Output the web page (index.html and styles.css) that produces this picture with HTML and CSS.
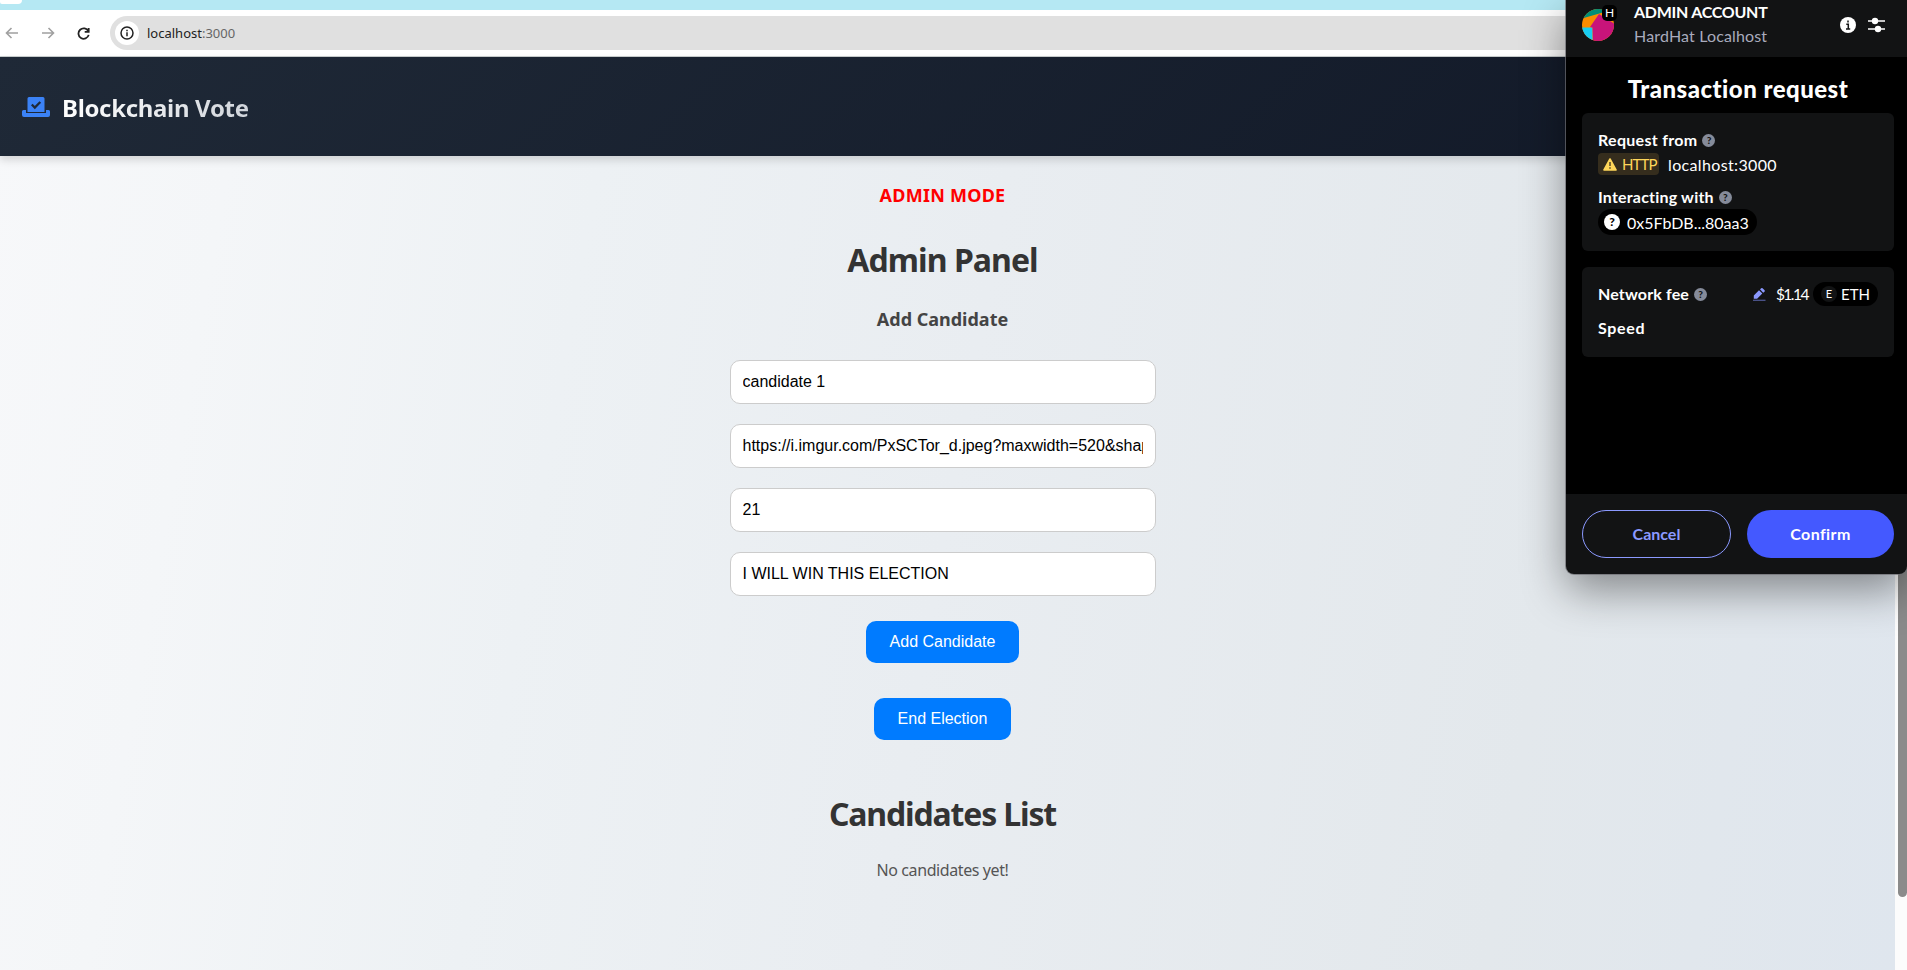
FILE: index.html
```
<!DOCTYPE html>
<html lang="en">
<head>
<meta charset="utf-8">
<title>Blockchain Vote</title>
<link rel="stylesheet" href="styles.css">
</head>
<body>
<div class="window">
  <div class="tabstrip"><span class="tab"></span></div>
  <div class="toolbar">
    <svg class="nav-icon" viewBox="0 0 14 14"><path d="M13 7H2M6.500 2 1.500 7l5 5" stroke="#a0a0a0"/></svg>
    <svg class="nav-icon" viewBox="0 0 14 14"><path d="M1 7h11M7.500 2l5 5-5 5" stroke="#a0a0a0"/></svg>
    <svg class="nav-icon reload" viewBox="0 0 14 14"><path d="M12.200 4.600A5.600 5.600 0 1 0 12.600 8.500M12.600 1v4.300H8.300" stroke="#222" stroke-width="1.900"/></svg>
    <div class="address">
      <span class="site-info"><svg width="14" height="14" viewBox="0 0 14 14"><circle cx="7" cy="7" r="6" fill="none" stroke="#222" stroke-width="1.500"/><path d="M7 6.300v4M7 3.700v1.500" stroke="#222" stroke-width="1.500"/></svg></span>
      <span class="url">localhost<span class="port">:3000</span></span>
    </div>
  </div>
  <div class="viewport">
    <div class="page">
      <header class="site-header">
        <svg class="ballot" viewBox="0 0 28 20"><path fill="#3b82f6" d="M7 0h14a1.500 1.500 0 0 1 1.500 1.500V15h-17V1.500A1.500 1.500 0 0 1 7 0zM0 14.500A1.500 1.500 0 0 1 1.500 13H4v3h20v-3h2.500a1.500 1.500 0 0 1 1.500 1.500v3.500a2 2 0 0 1-2 2H2a2 2 0 0 1-2-2z"/><path d="m9.800 7.500 3 3L18.300 5" fill="none" stroke="#1f2937" stroke-width="2.300"/></svg>
        <span class="brand">Blockchain Vote</span>
      </header>
      <main class="content">
        <p class="mode">ADMIN MODE</p>
        <h1 class="title">Admin Panel</h1>
        <h3 class="subtitle">Add Candidate</h3>
        <form class="fields">
          <input class="field" value="candidate 1">
          <input class="field" value="https://i.imgur.com/PxSCTor_d.jpeg?maxwidth=520&amp;shape=thumb">
          <input class="field" value="21">
          <input class="field" value="I WILL WIN THIS ELECTION">
        </form>
        <button class="action">Add Candidate</button>
        <button class="action end">End Election</button>
        <h1 class="title list-title">Candidates List</h1>
        <p class="empty">No candidates yet!</p>
      </main>
    </div>
    <div class="scrollbar"><div class="thumb"></div></div>
  </div>
</div>

<aside class="wallet">
  <div class="account-bar">
    <div class="avatar">
      <svg width="32" height="32" viewBox="0 0 32 32"><clipPath id="round"><circle cx="16" cy="16" r="16"/></clipPath><g clip-path="url(#round)"><path fill="#fa8c00" d="M0 0h32v32H0z"/><path fill="#018e77" d="M0 9.500 26 2V-4H0z"/><path fill="#18cdf2" d="M0 18.500h10.500V32H0z"/><path fill="#c8147a" d="M8 18 17 5l16 10v17H11l-.5-13.500z"/></g></svg>
      <span class="net-badge">H</span>
    </div>
    <div class="account">
      <span class="account-name">ADMIN ACCOUNT</span>
      <span class="account-net">HardHat Localhost</span>
    </div>
    <svg class="info" width="16" height="16" viewBox="0 0 16 16"><circle cx="8" cy="8" r="8" fill="#fff"/><path d="M8 3.500v2M6.300 7.200H8.300V12M6 12h4.200" fill="none" stroke="#121314" stroke-width="1.500"/></svg>
    <svg width="17" height="16" viewBox="0 0 17 16"><path d="M0 4h17M0 12h17" stroke="#fff" stroke-width="1.300"/><circle cx="7" cy="4" r="3.200" fill="#fff"/><circle cx="10" cy="12" r="3.200" fill="#fff"/></svg>
  </div>
  <div class="request">
    <h2 class="request-title">Transaction request</h2>
    <section class="card origin">
      <div class="label-row"><span class="label from">Request from</span><span class="help">?</span></div>
      <div class="site-row">
        <span class="http"><svg width="14" height="13" viewBox="0 0 14 13"><path d="M7 1 13 12H1z" fill="#ffd75a" stroke="#ffd75a" stroke-width="1.600" stroke-linejoin="round"/><path d="M7 4v4M7 9.300v1.400" stroke="#3a311e" stroke-width="1.300"/></svg><span class="http-text">HTTP</span></span>
        <span class="host">localhost:3000</span>
      </div>
      <div class="label-row second"><span class="label with">Interacting with</span><span class="help">?</span></div>
      <div class="contract"><span class="unknown">?</span><span class="hash">0x5FbDB...80aa3</span></div>
    </section>
    <section class="card fee">
      <div class="fee-row">
        <span class="label net">Network fee</span><span class="help">?</span>
        <svg class="pencil" width="13" height="13" viewBox="0 0 13 13"><path d="M.8 10.700V7.400L6 2.200l3.300 3.300-5.200 5.200zM7 1.300 8 .4a1.300 1.300 0 0 1 1.800 0L11.400 2a1.300 1.300 0 0 1 0 1.800l-1.200 1z" fill="#8b99ff"/><path d="M0 12.300h12.500" stroke="#4d558e" stroke-width="1.300"/></svg>
        <span class="price">$1.14</span>
        <span class="token"><span class="token-icon">E</span><span class="token-name">ETH</span></span>
      </div>
      <div class="label speed">Speed</div>
    </section>
  </div>
  <div class="buttons">
    <button class="cancel">Cancel</button>
    <button class="confirm">Confirm</button>
  </div>
</aside>
</body>
</html>
```
FILE: styles.css
```
* { box-sizing: border-box; }
body { margin: 0; height: 970px; overflow: hidden; font-family: "Noto Sans", sans-serif; }
.window { display: flex; flex-direction: column; height: 970px; }

/* Browser chrome */
.tabstrip { height: 10px; background: #b5e8f3; }
.tab { display: block; width: 22px; height: 4px; background: #fff; border-radius: 0 0 8px 4px; }
.toolbar { display: flex; align-items: center; height: 47px; background: #fff; border-bottom: 1px solid #c9cfcf; padding-left: 5px; }
.nav-icon { width: 14px; height: 14px; margin-right: 22px; fill: none; stroke-width: 1.6; }
.nav-icon.reload { width: 13px; height: 13px; margin-right: 23px; }
.address { flex: 1; display: flex; align-items: center; height: 34px; margin-left: -3px; padding-left: 5px; background: #e0e0e0; border-radius: 17px 0 0 17px; }
.site-info { display: flex; align-items: center; justify-content: center; width: 24px; height: 24px; border-radius: 50%; background: #fff; }
.url { margin-left: 8px; font-size: 13px; color: #222; }
.port { color: #666; }

/* Voting page */
.viewport { flex: 1; display: flex; min-height: 0; }
.page { flex: 1; background: linear-gradient(100deg, #f7f8fa 0%, #f4f6f8 12%, #edf1f4 30%, #e9edf1 50%, #e3e8ec 80%, #dfe6ee 100%); }
.site-header { position: relative; display: flex; align-items: center; height: 99px; padding: 3px 0 0 22px; background: linear-gradient(135deg, #1f2937, #111827); box-shadow: 0 4px 8px rgba(0, 0, 0, .14); }
.ballot { width: 28px; height: 20px; margin-bottom: 2px; }
.brand { margin-left: 12px; font-size: 24px; font-weight: 700; line-height: 32px; letter-spacing: -.33px; background: linear-gradient(90deg, #fff, #d1d5db); background-clip: text; color: transparent; }
.content { display: flex; flex-direction: column; align-items: center; margin-left: -10px; }
.mode { margin: 26px 0 0; line-height: 26px; font-size: 18px; font-weight: 700; letter-spacing: .25px; color: #f00; }
.title { margin: 30px 0 0; line-height: 44px; font-size: 32px; font-weight: 700; letter-spacing: -.95px; color: #333; }
.subtitle { margin: 24px 0 0; line-height: 26px; font-size: 18px; font-weight: 700; color: #444; }
.fields { display: flex; flex-direction: column; gap: 20px; margin-top: 28px; }
.field { width: 426px; height: 44px; padding: 0 12px; border: 1px solid #ccc; border-radius: 10px; background: #fff; color: #000; font: 16px "Liberation Sans", Arial, sans-serif; }
.action { width: 153px; height: 42px; margin-top: 25px; border: 0; border-radius: 10px; background: #007bff; color: #fff; font: 16px "Liberation Sans", Arial, sans-serif; }
.action.end { width: 137px; margin-top: 35px; }
.list-title { margin-top: 52px; letter-spacing: -1.15px; }
.empty { margin: 23px 0 0; line-height: 22px; font-size: 16px; letter-spacing: -.4px; color: #555; }
.scrollbar { width: 12px; padding: 0 0 0 3px; background: #fcfcfc; }
.thumb { height: 840px; border-radius: 5px; background: #8b8b8b; }

/* Wallet popup */
.wallet { position: absolute; left: 1566px; top: 0; width: 341px; height: 574px; display: flex; flex-direction: column; background: #121314; border-radius: 0 0 8px 8px; box-shadow: 0 0 0 1px rgba(110, 110, 115, .7), 0 16px 44px rgba(0, 0, 0, .42); color: #fff; font-family: Lato, sans-serif; }
.account-bar { display: flex; align-items: flex-start; height: 57px; padding: 0 22px 0 16px; }
.avatar { position: relative; width: 32px; height: 32px; margin-top: 9px; }
.net-badge { position: absolute; left: 20px; top: -4px; width: 15px; height: 16px; border-radius: 5px; background: #000; font-size: 12px; line-height: 16px; text-align: center; }
.account { flex: 1; display: flex; flex-direction: column; margin: 0 0 0 20px; }
.account-name { font-size: 16px; line-height: 24px; font-weight: 700; letter-spacing: -.27px; }
.account-net { font-size: 16px; line-height: 24px; letter-spacing: .15px; color: #a9abbd; }
.account-bar > svg { margin-top: 17px; }
.account-bar > .info { margin-right: 12px; }
.request { flex: 1; padding: 16px; background: #000; }
.request-title { width: 312px; margin: 0 0 8px; font-size: 24px; line-height: 32px; font-weight: 900; letter-spacing: .48px; text-align: center; white-space: nowrap; }
.card { width: 312px; padding: 15px 16px; background: #121314; border-radius: 6px; }
.origin { height: 138px; }
.fee { height: 90px; margin-top: 16px; }
.label { font-size: 16px; line-height: 24px; font-weight: 700; }
.from { letter-spacing: .3px; }
.with { letter-spacing: .2px; }
.net { letter-spacing: .15px; }
.label-row { display: flex; align-items: center; height: 24px; }
.help { display: inline-block; width: 13px; height: 13px; margin-left: 5px; border-radius: 50%; background: #858b9a; color: #121314; font-size: 10px; line-height: 13px; font-weight: 900; text-align: center; }
.site-row { display: flex; align-items: center; height: 22px; margin-top: 1px; }
.http { display: flex; align-items: center; width: 61px; height: 22px; padding-left: 5px; border-radius: 4px; background: #352d1d; color: #ffd75a; }
.http-text { margin-left: 5px; font-size: 15px; letter-spacing: -.9px; }
.host { margin-left: 9px; font-size: 16px; letter-spacing: .35px; }
.label-row.second { margin-top: 10px; }
.contract { display: flex; align-items: center; width: 159px; height: 26px; padding-left: 6px; border-radius: 13px; background: #000; }
.unknown { width: 16px; height: 16px; border-radius: 50%; background: #fff; color: #000; font-size: 12px; line-height: 16px; font-weight: 900; text-align: center; }
.hash { margin-left: 7px; font-size: 16px; }
.fee-row { display: flex; align-items: center; height: 24px; }
.pencil { margin-left: auto; }
.price { margin-left: 10px; font-size: 15.5px; letter-spacing: -1.5px; }
.token { display: flex; align-items: center; width: 65px; height: 24px; margin-left: 5px; padding-left: 8px; border-radius: 12px; background: #000; }
.token-icon { width: 16px; height: 16px; border-radius: 50%; background: #121314; font-size: 11px; line-height: 16px; text-align: center; }
.token-name { margin-left: 4px; font-size: 15px; }
.speed { margin-top: 10px; letter-spacing: .7px; }
.buttons { display: flex; gap: 16px; height: 80px; padding: 16px 0 0 16px; }
.buttons button { height: 48px; padding: 0 0 2px; border-radius: 24px; font: 700 16px Lato, sans-serif; }
.cancel { width: 149px; border: 1px solid #8b99ff; background: transparent; color: #8b99ff; }
.confirm { width: 147px; border: 0; background: #4459ff; color: #fff; letter-spacing: .4px; }
```
